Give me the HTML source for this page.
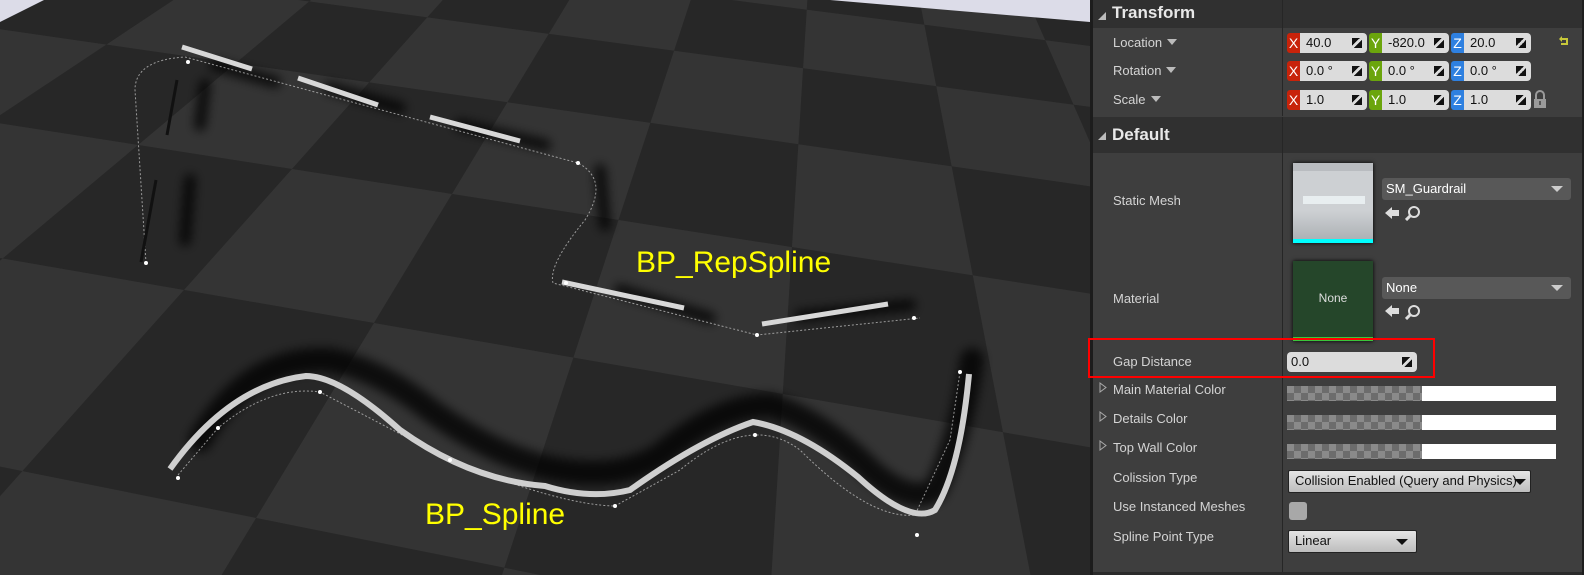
<!DOCTYPE html>
<html><head><meta charset="utf-8"><style>
*{margin:0;padding:0;box-sizing:border-box}
html,body{width:1584px;height:575px;overflow:hidden}
body{background:#2a2a2a;font-family:"Liberation Sans",sans-serif;position:relative}
#vp{position:absolute;left:0;top:0;width:1090px;height:575px;overflow:hidden;background:#2e2e2e}
#vp svg{position:absolute;left:0;top:0}
#sep{position:absolute;left:1090px;top:0;width:3px;height:575px;background:#1c1c1c}
#panel{position:absolute;left:1093px;top:0;width:491px;height:575px;background:#3e3e3e;overflow:hidden}
.hdr{position:absolute;left:0;width:491px;background:#303030;color:#e8e8e8;font-weight:bold;font-size:17px}
.hdr span{position:absolute;left:19px}
.hdr i{position:absolute;left:5px;width:0;height:0;border-left:8px solid transparent;border-bottom:8px solid #bbb}
.div{position:absolute;left:189px;width:1px;background:#262626}
.lbl{position:absolute;left:20px;color:#d4d4d4;font-size:13px}
.lbl b{display:inline-block;width:0;height:0;border-left:5px solid transparent;border-right:5px solid transparent;border-top:6px solid #bbb;margin-left:5px;vertical-align:2px}
.tag{position:absolute;width:13px;height:20px;color:#fff;font-size:14px;text-align:center;line-height:20px;border-radius:3px 0 0 3px}
.fld{position:absolute;height:20px;background:#dcdcdc;border-radius:0 4px 4px 0;color:#111;font-size:13px;line-height:20px;padding-left:6px}
.arr{position:absolute;right:5px;top:5px;width:10px;height:10px;background:linear-gradient(135deg,#111 0 40%,transparent 40% 60%,#111 60%)}
.chk{position:absolute;left:194px;width:135px;height:15px;background:repeating-conic-gradient(#6c6c6c 0 25%,#8a8a8a 0 50%) 0 0/14px 14px}
.wht{position:absolute;left:329px;width:134px;height:15px;background:#fff}
.tri{position:absolute;left:6px}
.dd{position:absolute;background:linear-gradient(#e4e4e4,#bdbdbd);border:1px solid #222;border-radius:2px;color:#111;font-size:13px;line-height:20px;padding-left:6px}
.dd b{position:absolute;right:8px;top:8px;border-left:6px solid transparent;border-right:6px solid transparent;border-top:6px solid #111}
.dk{position:absolute;background:#585858;border-radius:3px;color:#fff;font-size:13px;line-height:22px;padding-left:4px}
.dk b{position:absolute;right:8px;top:8px;border-left:6px solid transparent;border-right:6px solid transparent;border-top:6px solid #ccc}
</style></head><body>
<div id="vp">
<svg width="1090" height="575"><defs><filter id="bl" x="-20%" y="-20%" width="140%" height="140%"><feGaussianBlur stdDeviation="5"/></filter></defs>
<g id="grid"></g>
<polygon points="830,0 1090,0 1090,22" fill="#dcdce8"/>
<polygon points="0,0 44,0 0,22" fill="#dcdce8"/>
<g fill="none" stroke="#000" stroke-opacity=".75" stroke-width="12" stroke-linecap="round" filter="url(#bl)">
<path d="M215,65 L275,82 M330,88 L400,108 M460,125 L545,145 M600,170 L605,225 M620,290 L710,318 M800,316 L910,305"/>
<path d="M205,85 L200,125 M190,180 L185,240" stroke-width="12"/>
<path d="M200,440 Q250,355 330,360 Q380,370 430,410 Q500,460 560,470 Q620,480 660,455 Q720,405 770,405 Q820,420 870,470 Q910,505 935,490 Q960,440 972,360" stroke-width="24"/>
</g>
<g fill="none" stroke="#ccc" stroke-opacity=".7" stroke-width="1" stroke-dasharray="2,2">
<path d="M146,263 L135,90 Q135,60 185,57 L578,163 Q610,180 585,220 Q548,265 553,283 L757,335 L920,318"/>
<path d="M178,475 L218,428 Q270,385 320,392 L450,460 Q560,505 615,506 L680,470 Q750,412 800,450 Q870,520 915,515 L950,440 L960,372"/>
</g>
<g stroke="#d8d8d8" stroke-width="5">
<path d="M182,47 L252,69 M298,78 L378,105 M430,117 L520,141 M562,282 L684,308 M762,324 L888,304"/>
</g>
<g stroke="#111" stroke-width="3"><path d="M177,80 L167,135 M156,180 L141,262"/></g>
<path d="M170,469 Q230,385 306,376 Q340,376 400,430 Q470,480 545,486 Q590,500 630,490 Q700,440 753,422 Q800,430 858,477 Q910,525 935,510 Q960,470 969,374" fill="none" stroke="#cfcfcf" stroke-width="6"/>
<g fill="#fff"><circle cx="146" cy="263" r="2"/><circle cx="188" cy="62" r="2"/><circle cx="578" cy="163" r="2"/><circle cx="566" cy="283" r="2"/><circle cx="757" cy="335" r="2"/><circle cx="914" cy="318" r="2"/><circle cx="178" cy="478" r="2"/><circle cx="218" cy="428" r="2"/><circle cx="320" cy="392" r="2"/><circle cx="450" cy="460" r="2"/><circle cx="615" cy="506" r="2"/><circle cx="755" cy="435" r="2"/><circle cx="917" cy="535" r="2"/><circle cx="960" cy="372" r="2"/></g>
<text x="636" y="272" font-family="Liberation Sans" font-size="30" fill="#ffff00">BP_RepSpline</text>
<text x="425" y="524" font-family="Liberation Sans" font-size="30" fill="#ffff00">BP_Spline</text>
</svg></div>
<div id="sep"></div>
<div id="panel">
<div class="hdr" style="top:0;height:28px"><i style="top:12px"></i><span style="top:3px">Transform</span></div>
<div class="div" style="top:0;height:116px"></div>
<div class="hdr" style="top:117px;height:36px"><i style="top:15px"></i><span style="top:8px">Default</span></div>
<div class="div" style="top:117px;height:458px"></div>

<div class="lbl" style="top:35px">Location<b></b></div>
<div class="lbl" style="top:63px">Rotation<b></b></div>
<div class="lbl" style="top:92px">Scale<b></b></div>

<div class="tag" style="left:194px;top:33px;background:#c8230a">X</div><div class="fld" style="left:207px;top:33px;width:67px">40.0<i class="arr"></i></div>
<div class="tag" style="left:276px;top:33px;background:#6ba50d">Y</div><div class="fld" style="left:289px;top:33px;width:67px">-820.0<i class="arr"></i></div>
<div class="tag" style="left:358px;top:33px;background:#2e80e0">Z</div><div class="fld" style="left:371px;top:33px;width:67px">20.0<i class="arr"></i></div>
<div class="tag" style="left:194px;top:61px;background:#c8230a">X</div><div class="fld" style="left:207px;top:61px;width:67px">0.0 °<i class="arr"></i></div>
<div class="tag" style="left:276px;top:61px;background:#6ba50d">Y</div><div class="fld" style="left:289px;top:61px;width:67px">0.0 °<i class="arr"></i></div>
<div class="tag" style="left:358px;top:61px;background:#2e80e0">Z</div><div class="fld" style="left:371px;top:61px;width:67px">0.0 °<i class="arr"></i></div>
<div class="tag" style="left:194px;top:90px;background:#c8230a">X</div><div class="fld" style="left:207px;top:90px;width:67px">1.0<i class="arr"></i></div>
<div class="tag" style="left:276px;top:90px;background:#6ba50d">Y</div><div class="fld" style="left:289px;top:90px;width:67px">1.0<i class="arr"></i></div>
<div class="tag" style="left:358px;top:90px;background:#2e80e0">Z</div><div class="fld" style="left:371px;top:90px;width:67px">1.0<i class="arr"></i></div>
<svg style="position:absolute;left:465px;top:36px" width="12" height="12"><path d="M2,3 H9 V8 H3" fill="none" stroke="#c8c83a" stroke-width="2"/><path d="M1,3 L4,0 V6Z" fill="#c8c83a"/></svg>
<svg style="position:absolute;left:440px;top:90px" width="14" height="19"><path d="M3,9 V5 A4,4 0 0 1 11,5 V9" fill="none" stroke="#9a9a9a" stroke-width="2"/><rect x="1" y="9" width="12" height="9" fill="#9a9a9a"/><rect x="6" y="11" width="2" height="4" fill="#555"/></svg>

<div class="lbl" style="top:193px">Static Mesh</div>
<div style="position:absolute;left:200px;top:163px;width:80px;height:80px;background:linear-gradient(#b9bcc0 0 10%,#cdd0d3 10% 60%,#a9adb1);box-shadow:0 0 4px #000"><div style="position:absolute;left:10px;top:33px;width:62px;height:8px;background:#e8eef0"></div><div style="position:absolute;left:0;top:76px;width:80px;height:4px;background:#00ffff"></div></div>
<div class="dk" style="left:289px;top:178px;width:189px">SM_Guardrail<b></b></div>
<svg style="position:absolute;left:291px;top:206px" width="16" height="14"><path d="M1,7 L8,1 V4 H15 V10 H8 V13Z" fill="#ddd"/></svg>
<svg style="position:absolute;left:312px;top:205px" width="16" height="16"><circle cx="9" cy="7" r="5" fill="none" stroke="#ddd" stroke-width="2"/><path d="M5,11 L1,15" stroke="#ddd" stroke-width="3"/></svg>

<div class="lbl" style="top:291px">Material</div>
<div style="position:absolute;left:200px;top:261px;width:80px;height:80px;background:#25462a;box-shadow:0 0 4px #000;color:#ddd;font-size:12px;text-align:center;line-height:74px">None<div style="position:absolute;left:0;top:76px;width:80px;height:4px;background:#3bc43b"></div></div>
<div class="dk" style="left:289px;top:277px;width:189px">None<b></b></div>
<svg style="position:absolute;left:291px;top:304px" width="16" height="14"><path d="M1,7 L8,1 V4 H15 V10 H8 V13Z" fill="#ddd"/></svg>
<svg style="position:absolute;left:312px;top:304px" width="16" height="16"><circle cx="9" cy="7" r="5" fill="none" stroke="#ddd" stroke-width="2"/><path d="M5,11 L1,15" stroke="#ddd" stroke-width="3"/></svg>

<div class="lbl" style="top:354px">Gap Distance</div>
<div class="fld" style="left:194px;top:352px;width:130px;border-radius:4px;padding-left:4px">0.0<i class="arr"></i></div>

<svg class="tri" style="top:382px" width="8" height="11"><path d="M1,1 L7,5.5 L1,10Z" fill="none" stroke="#aaa"/></svg><div class="lbl" style="top:382px">Main Material Color</div>
<div class="chk" style="top:386px"></div><div class="wht" style="top:386px"></div>
<svg class="tri" style="top:411px" width="8" height="11"><path d="M1,1 L7,5.5 L1,10Z" fill="none" stroke="#aaa"/></svg><div class="lbl" style="top:411px">Details Color</div>
<div class="chk" style="top:415px"></div><div class="wht" style="top:415px"></div>
<svg class="tri" style="top:440px" width="8" height="11"><path d="M1,1 L7,5.5 L1,10Z" fill="none" stroke="#aaa"/></svg><div class="lbl" style="top:440px">Top Wall Color</div>
<div class="chk" style="top:444px"></div><div class="wht" style="top:444px"></div>

<div class="lbl" style="top:470px">Colission Type</div>
<div class="dd" style="left:195px;top:470px;width:243px;height:23px">Collision Enabled (Query and Physics)<b style="right:4px"></b></div>
<div class="lbl" style="top:499px">Use Instanced Meshes</div>
<div style="position:absolute;left:196px;top:502px;width:18px;height:18px;background:#a8a8a8;border-radius:3px"></div>
<div class="lbl" style="top:529px">Spline Point Type</div>
<div class="dd" style="left:195px;top:530px;width:129px;height:23px">Linear<b></b></div>
<div style="position:absolute;left:0;top:572px;width:491px;height:3px;background:#2a2a2a"></div>
<div style="position:absolute;left:489px;top:0;width:2px;height:575px;background:#1e1e1e"></div>
</div>
<div style="position:absolute;left:1088px;top:338px;width:347px;height:40px;border:2px solid #f00"></div>
<script>
(function(){
var src=[[0,0],[1,0],[0,1],[1,1]];
var dst=[[292,169],[452,194],[184,290],[374,323]];
var A=[],b=[];
for(var k=0;k<4;k++){var x=src[k][0],y=src[k][1],u=dst[k][0],v=dst[k][1];
A.push([x,y,1,0,0,0,-u*x,-u*y]);b.push(u);
A.push([0,0,0,x,y,1,-v*x,-v*y]);b.push(v);}
var n=8;
for(var i=0;i<n;i++){var p=i;for(var r=i+1;r<n;r++)if(Math.abs(A[r][i])>Math.abs(A[p][i]))p=r;
var t=A[i];A[i]=A[p];A[p]=t;t=b[i];b[i]=b[p];b[p]=t;
for(var r=0;r<n;r++){if(r==i)continue;var f=A[r][i]/A[i][i];for(var c=i;c<n;c++)A[r][c]-=f*A[i][c];b[r]-=f*b[i];}}
var h=[];for(var i=0;i<n;i++)h.push(b[i]/A[i][i]);h.push(1);
function P(x,y){var w=h[6]*x+h[7]*y+1;if(w<=0.02)return null;return[(h[0]*x+h[1]*y+h[2])/w,(h[3]*x+h[4]*y+h[5])/w];}
var g=document.getElementById('grid'),s='';
for(var i=-15;i<20;i++)for(var j=-15;j<20;j++){
var q=[P(i,j),P(i+1,j),P(i+1,j+1),P(i,j+1)],ok=true;
for(var k=0;k<4;k++){if(!q[k]||Math.abs(q[k][0])>6000||Math.abs(q[k][1])>6000)ok=false;}
if(!ok)continue;
var c=((i+j)%2+2)%2==0?'#343434':'#272727';
s+='<polygon fill="'+c+'" points="'+q.map(function(p){return p[0].toFixed(1)+','+p[1].toFixed(1)}).join(' ')+'"/>';}
g.innerHTML=s;
})();
</script>
</body></html>
